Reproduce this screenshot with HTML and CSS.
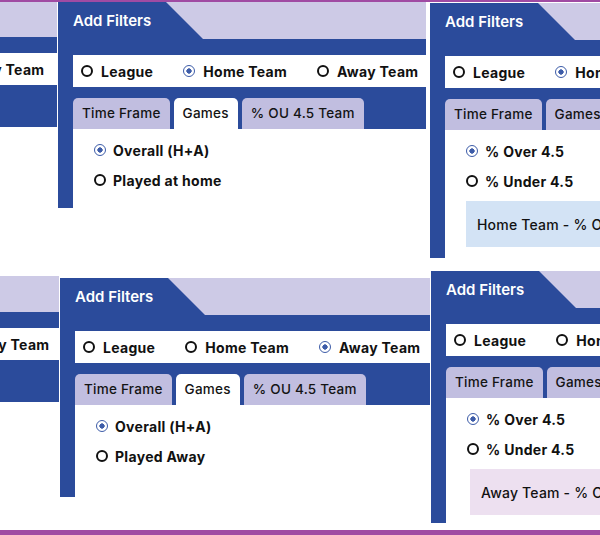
FILE: index.html
```html
<!DOCTYPE html>
<html lang="en">
<head>
<meta charset="utf-8">
<title>Add Filters</title>
<link rel="stylesheet" href="styles.css">
</head>
<body>
<div class="stripe top"></div>

<div class="row row-1">
  <div class="crop crop-a">
    <div class="widget">
      <div class="w-head"><div class="w-title">Add Filters</div></div>
      <div class="w-body">
        <div class="teams">
          <div class="opt"><span class="radio"></span>League</div>
          <div class="opt"><span class="radio"></span>Home Team</div>
          <div class="opt"><span class="radio on"></span>Away Team</div>
        </div>
        <div class="tabs">
          <div class="tab">Time Frame</div>
          <div class="tab active">Games</div>
          <div class="tab">% OU 4.5 Team</div>
        </div>
        <div class="content"></div>
      </div>
    </div>
  </div>

  <div class="crop crop-b">
    <div class="widget">
      <div class="w-head"><div class="w-title">Add Filters</div></div>
      <div class="w-body">
        <div class="teams">
          <div class="opt"><span class="radio"></span>League</div>
          <div class="opt"><span class="radio on"></span>Home Team</div>
          <div class="opt"><span class="radio"></span>Away Team</div>
        </div>
        <div class="tabs">
          <div class="tab">Time Frame</div>
          <div class="tab active">Games</div>
          <div class="tab">% OU 4.5 Team</div>
        </div>
        <div class="content">
          <div class="choice"><span class="radio on"></span>Overall (H+A)</div>
          <div class="choice"><span class="radio"></span>Played at home</div>
        </div>
      </div>
    </div>
  </div>

  <div class="crop crop-c">
    <div class="widget">
      <div class="w-head"><div class="w-title">Add Filters</div></div>
      <div class="w-body">
        <div class="teams">
          <div class="opt"><span class="radio"></span>League</div>
          <div class="opt"><span class="radio on"></span>Home Team</div>
          <div class="opt"><span class="radio"></span>Away Team</div>
        </div>
        <div class="tabs">
          <div class="tab">Time Frame</div>
          <div class="tab">Games</div>
          <div class="tab active">% OU 4.5 Team</div>
        </div>
        <div class="content">
          <div class="choice"><span class="radio on"></span>% Over 4.5</div>
          <div class="choice"><span class="radio"></span>% Under 4.5</div>
          <div class="note note-home">Home Team - % Over 4.5</div>
        </div>
      </div>
    </div>
  </div>
</div>

<div class="row row-2">
  <div class="crop crop-d">
    <div class="widget">
      <div class="w-head"><div class="w-title">Add Filters</div></div>
      <div class="w-body">
        <div class="teams">
          <div class="opt"><span class="radio"></span>League</div>
          <div class="opt"><span class="radio"></span>Home Team</div>
          <div class="opt"><span class="radio on"></span>Away Team</div>
        </div>
        <div class="tabs">
          <div class="tab">Time Frame</div>
          <div class="tab active">Games</div>
          <div class="tab">% OU 4.5 Team</div>
        </div>
        <div class="content"></div>
      </div>
    </div>
  </div>

  <div class="crop crop-e">
    <div class="widget">
      <div class="w-head"><div class="w-title">Add Filters</div></div>
      <div class="w-body">
        <div class="teams">
          <div class="opt"><span class="radio"></span>League</div>
          <div class="opt"><span class="radio"></span>Home Team</div>
          <div class="opt"><span class="radio on"></span>Away Team</div>
        </div>
        <div class="tabs">
          <div class="tab">Time Frame</div>
          <div class="tab active">Games</div>
          <div class="tab">% OU 4.5 Team</div>
        </div>
        <div class="content">
          <div class="choice"><span class="radio on"></span>Overall (H+A)</div>
          <div class="choice"><span class="radio"></span>Played Away</div>
        </div>
      </div>
    </div>
  </div>

  <div class="crop crop-f">
    <div class="widget">
      <div class="w-head"><div class="w-title">Add Filters</div></div>
      <div class="w-body">
        <div class="teams">
          <div class="opt"><span class="radio"></span>League</div>
          <div class="opt"><span class="radio"></span>Home Team</div>
          <div class="opt"><span class="radio on"></span>Away Team</div>
        </div>
        <div class="tabs">
          <div class="tab">Time Frame</div>
          <div class="tab">Games</div>
          <div class="tab active">% OU 4.5 Team</div>
        </div>
        <div class="content">
          <div class="choice"><span class="radio on"></span>% Over 4.5</div>
          <div class="choice"><span class="radio"></span>% Under 4.5</div>
          <div class="note note-away">Away Team - % Over 4.5</div>
        </div>
      </div>
    </div>
  </div>
</div>

<div class="stripe bottom"></div>
</body>
</html>
```

FILE: styles.css
```css
:root {
  --blue: #2b4b9b;
  --lav: #cdcae6;
  --tab: #c1bee0;
  --purple: #a04ba3;
  --sel: #3d5ca8;
}

* { box-sizing: border-box; }

html, body {
  margin: 0;
  padding: 0;
  width: 600px;
  height: 535px;
  overflow: hidden;
  background: #fff;
  font-family: Inter, "Open Sans", "DejaVu Sans", sans-serif;
  color: #111;
}

.stripe { background: var(--purple); width: 100%; }
.stripe.top { height: 2px; }
.stripe.bottom { height: 5px; }

.row {
  display: flex;
  align-items: flex-start;
  overflow: hidden;
}
.row-1 { height: 266px; }
.row-2 { height: 262px; }

.crop {
  overflow: hidden;
  flex: none;
}

.crop-a { width: 57px; height: 206px; }
.crop-a .widget { margin-left: -316px; margin-top: -2px; }
.crop-b { width: 368px; height: 206px; margin-left: 1px; }
.crop-c { width: 170px; height: 255px; margin-left: 4px; margin-top: 1px; }

.crop-d { width: 59px; height: 140px; margin-top: 8px; }
.crop-d .widget { margin-left: -311px; margin-top: -1px; }
.crop-e { width: 370px; height: 219px; margin-left: 1px; margin-top: 10px; }
.crop-f { width: 169px; height: 252px; margin-left: 1px; margin-top: 3px; }

.widget { width: 440px; }

.w-head {
  height: 37px;
  background: var(--lav);
}
.w-title {
  width: 145px;
  height: 37px;
  background: var(--blue);
  clip-path: polygon(0 0, 108px 0, 145px 100%, 0 100%);
  color: #fff;
  font-weight: 600;
  font-size: 15px;
  line-height: 38px;
  padding-left: 15px;
  white-space: nowrap;
}

.w-body {
  background: var(--blue);
  padding: 16px 0 0 15px;
}

.teams {
  height: 32px;
  background: #fff;
  display: flex;
  align-items: center;
  padding-left: 8px;
  white-space: nowrap;
}
.opt {
  display: flex;
  align-items: center;
  gap: 8px;
  font-weight: 700;
  font-size: 14px;
  letter-spacing: 0.3px;
  margin-right: 30px;
}

.radio {
  width: 12px;
  height: 12px;
  border: 2px solid #111;
  border-radius: 50%;
  flex: none;
  background: #fff;
}
.radio.on {
  border: 1.5px solid var(--sel);
  background: radial-gradient(circle, var(--sel) 0 2.4px, #fff 2.9px);
}

.tabs {
  margin-top: 11px;
  height: 31px;
  display: flex;
  gap: 4px;
}
.tab {
  height: 31px;
  padding: 0 9px;
  background: var(--tab);
  border-radius: 5px 5px 0 0;
  font-size: 13.5px;
  font-weight: 500;
  letter-spacing: 0.25px;
  line-height: 31px;
  white-space: nowrap;
  color: #141414;
}
.tab.active { background: #fff; }

.content {
  background: #fff;
  height: 400px;
  padding: 6px 0 0 21px;
}
.choice {
  height: 30px;
  display: flex;
  align-items: center;
  gap: 7px;
  font-weight: 700;
  font-size: 14px;
  letter-spacing: 0.3px;
  white-space: nowrap;
}

.note {
  margin-top: 5px;
  height: 46px;
  padding-left: 11px;
  display: flex;
  align-items: center;
  font-size: 14px;
  font-weight: 500;
  white-space: nowrap;
  letter-spacing: 0.2px;
}
.note-home { background: #d3e3f5; margin-left: 0; }
.note-away { background: #ede0f0; margin-left: 3px; }
```
